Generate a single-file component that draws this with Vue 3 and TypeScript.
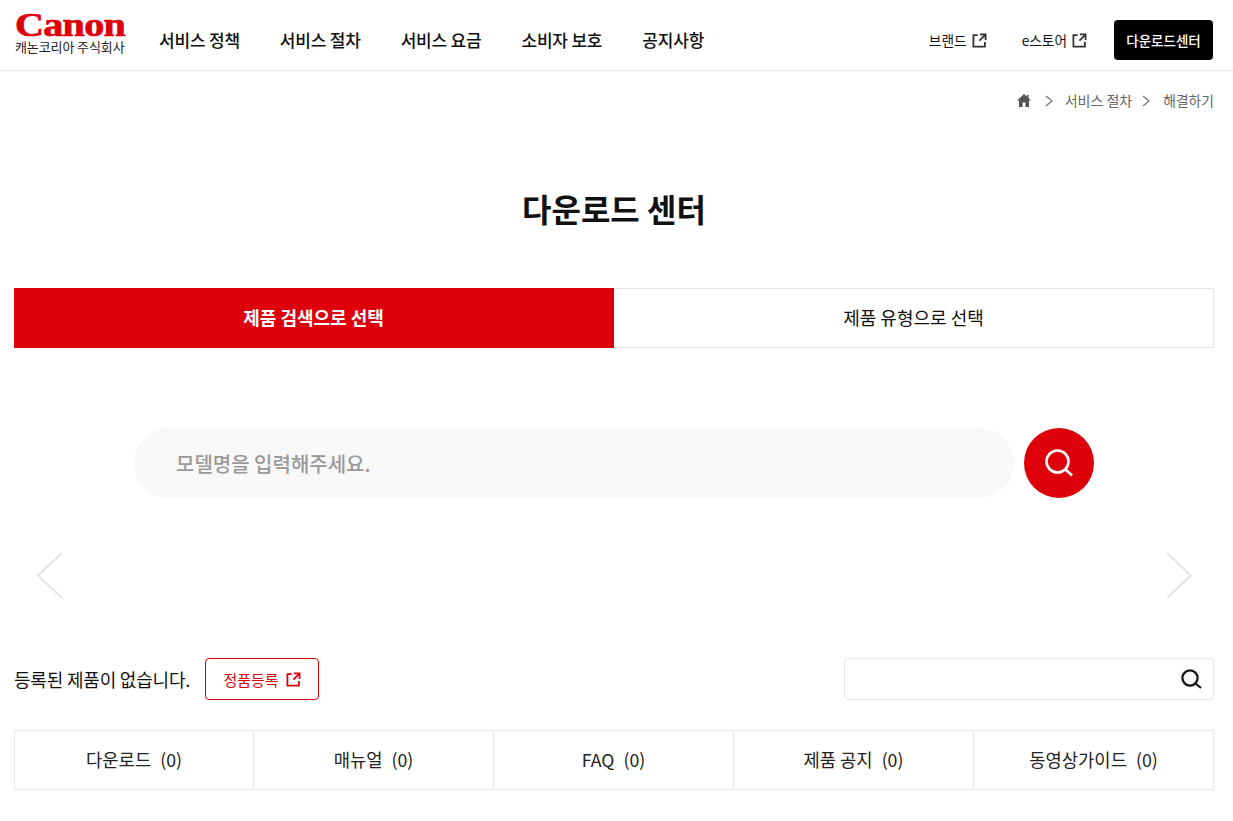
<template>
  <div class="page">
    <header class="header">
      <a class="logo">
        <span class="logoMark">Canon</span>
        <span class="logoSub">캐논코리아 주식회사</span>
      </a>
      <nav class="gnb">
        <a v-for="m in menus" :key="m">{{ m }}</a>
      </nav>
      <div class="util">
        <a v-for="u in utils" :key="u" class="utilLink">
          {{ u }}
          <svg class="ext" width="15" height="15" viewBox="0 0 16 16" fill="none" stroke="#333" stroke-width="1.9">
            <path d="M6 2.2H1.5V14.5H13.8V9.5" />
            <path d="M8.5 1.5H14.5V7.5M14 2L8 8.2" />
          </svg>
        </a>
        <a class="downBtn">다운로드센터</a>
      </div>
    </header>

    <main class="main">
      <div class="crumb">
        <svg width="14" height="13" viewBox="0 0 14 13" fill="#555">
          <path d="M7 0L0 6.5H2V13H5.6V8.6H8.4V13H12V6.5H14L11.6 4.2V1H9.8V2.6Z" />
        </svg>
        <svg class="chev first" width="8" height="12" viewBox="0 0 8 12" fill="none" stroke="#777" stroke-width="1.3"><path d="M1 1L7 6L1 11" /></svg>
        <span class="mid">서비스 절차</span>
        <svg class="chev" width="8" height="12" viewBox="0 0 8 12" fill="none" stroke="#777" stroke-width="1.3"><path d="M1 1L7 6L1 11" /></svg>
        <span class="last">해결하기</span>
      </div>

      <h1 class="title">다운로드 센터</h1>

      <div class="modeTabs">
        <div class="modeTab active">제품 검색으로 선택</div>
        <div class="modeTab">제품 유형으로 선택</div>
      </div>

      <div class="searchWrap">
        <div class="searchBox">모델명을 입력해주세요.</div>
        <button class="searchBtn">
          <svg width="30" height="30" viewBox="0 0 30 30" fill="none" stroke="#fff" stroke-width="2.6">
            <circle cx="13.5" cy="13.5" r="11" />
            <path d="M21.5 21.5L28 27.5" />
          </svg>
        </button>
      </div>

      <div class="slider">
        <svg width="28" height="48" viewBox="0 0 28 48" fill="none" stroke="#e6e6e6" stroke-width="2.2"><path d="M26 1L2 23.5L26 46" /></svg>
        <svg width="28" height="48" viewBox="0 0 28 48" fill="none" stroke="#e6e6e6" stroke-width="2.2"><path d="M2 1L26 23.5L2 46" /></svg>
      </div>

      <div class="resultRow">
        <div class="resultLeft">
          <span class="noItem">등록된 제품이 없습니다.</span>
          <a class="regBtn">
            정품등록
            <svg width="15" height="15" viewBox="0 0 16 16" fill="none" stroke="#dd000b" stroke-width="1.9">
              <path d="M6 2.2H1.5V14.5H13.8V9.5" />
              <path d="M8.5 1.5H14.5V7.5M14 2L8 8.2" />
            </svg>
          </a>
        </div>
        <div class="filterBox">
          <svg width="21" height="21" viewBox="0 0 21 21" fill="none" stroke="#111" stroke-width="2.2">
            <circle cx="9" cy="9" r="7.6" />
            <path d="M14.5 14.5L20 19" />
          </svg>
        </div>
      </div>

      <div class="countTabs">
        <div v-for="c in counts" :key="c.name" class="countTab">
          <span>{{ c.name }}</span><span class="num">({{ c.count }})</span>
        </div>
      </div>
    </main>
  </div>
</template>

<script setup lang="ts">
const menus: string[] = ['서비스 정책', '서비스 절차', '서비스 요금', '소비자 보호', '공지사항']
const utils: string[] = ['브랜드', 'e스토어']
const counts: { name: string; count: number }[] = [
  { name: '다운로드', count: 0 },
  { name: '매뉴얼', count: 0 },
  { name: 'FAQ', count: 0 },
  { name: '제품 공지', count: 0 },
  { name: '동영상가이드', count: 0 },
]
</script>

<style>
html, body {
  margin: 0;
  background: #fff;
}
</style>

<style scoped>
.page {
  font-family: "Noto Sans CJK KR", "Noto Sans", sans-serif;
  color: #111;
  min-height: 821px;
}
.header {
  box-sizing: border-box;
  height: 71px;
  border-bottom: 1px solid #e5e5e5;
  display: flex;
  align-items: center;
  padding: 10px 20px 0 15px;
}
.logo {
  display: flex;
  flex-direction: column;
  width: 111px;
  margin-top: -15px;
}
.logoMark {
  font-family: "Liberation Serif", serif;
  font-weight: 700;
  font-size: 34px;
  line-height: 27px;
  color: #dd000b;
  transform: scaleX(1.18);
  transform-origin: left center;
  letter-spacing: -0.6px;
  -webkit-text-stroke: 0.7px #dd000b;
}
.logoSub {
  font-size: 13px;
  line-height: 16px;
  letter-spacing: -0.1px;
  color: #222;
  white-space: nowrap;
  margin-top: 1px;
}
.gnb {
  display: flex;
  gap: 40px;
  margin-left: 33px;
  padding-bottom: 2px;
  font-size: 17px;
  font-weight: 500;
  letter-spacing: -0.2px;
}
.util {
  margin-left: auto;
  display: flex;
  align-items: center;
}
.utilLink {
  display: flex;
  align-items: center;
  gap: 5px;
  font-size: 13.7px;
  margin-right: 35px;
}
.utilLink:nth-child(2) {
  margin-right: 27px;
}
.downBtn {
  width: 99px;
  height: 40px;
  background: #000;
  color: #fff;
  border-radius: 4px;
  font-size: 13.5px;
  font-weight: 500;
  display: flex;
  align-items: center;
  justify-content: center;
}
.main {
  width: 1200px;
  margin-left: 14px;
}
.crumb {
  display: flex;
  align-items: center;
  justify-content: flex-end;
  height: 59px;
  font-size: 14px;
  color: #666;
  gap: 12px;
}
.crumb span {
  margin-bottom: 2px;
}
.crumb .mid {
  margin-right: -2px;
}
.crumb .last {
  font-size: 13.8px;
  margin-left: 1px;
}
.crumb .first {
  margin-left: 2px;
}
.title {
  margin: 55px 0 0;
  text-align: center;
  font-size: 32px;
  font-weight: 700;
  line-height: 46px;
  height: 103px;
}
.modeTabs {
  display: flex;
  height: 60px;
}
.modeTab {
  flex: 1;
  display: flex;
  align-items: center;
  justify-content: center;
  border: 1px solid #e5e5e5;
  border-left: 0;
  font-size: 18px;
  padding-bottom: 2px;
  box-sizing: border-box;
}
.modeTab.active {
  background: #dd000b;
  border-color: #dd000b;
  color: #fff;
  font-weight: 700;
}
.searchWrap {
  display: flex;
  justify-content: center;
  gap: 10px;
  margin-top: 80px;
}
.searchBox {
  width: 880px;
  height: 70px;
  box-sizing: border-box;
  border-radius: 35px;
  background: #f8f8f8;
  padding-left: 42px;
  display: flex;
  align-items: center;
  font-size: 20px;
  font-weight: 500;
  color: #999;
}
.searchBtn {
  width: 70px;
  height: 70px;
  border: 0;
  border-radius: 50%;
  background: #dd000b;
  padding: 0;
  display: flex;
  align-items: center;
  justify-content: center;
}
.slider {
  display: flex;
  justify-content: space-between;
  padding: 0 21px 0 22px;
  margin-top: 54px;
  height: 106px;
}
.resultRow {
  display: flex;
  justify-content: space-between;
  align-items: center;
  height: 42px;
}
.resultLeft {
  display: flex;
  align-items: center;
  gap: 15px;
}
.noItem {
  font-size: 18px;
  letter-spacing: -0.2px;
  color: #111;
}
.regBtn {
  width: 114px;
  height: 42px;
  box-sizing: border-box;
  border: 1px solid #dd000b;
  border-radius: 4px;
  color: #dd000b;
  font-size: 15px;
  display: flex;
  align-items: center;
  justify-content: center;
  gap: 7px;
}
.filterBox {
  width: 370px;
  height: 42px;
  box-sizing: border-box;
  border: 1px solid #e5e5e5;
  border-radius: 4px;
  display: flex;
  align-items: center;
  justify-content: flex-end;
  padding-right: 11px;
}
.countTabs {
  display: grid;
  grid-template-columns: repeat(5, 240px);
  height: 60px;
  margin-top: 30px;
}
.countTab {
  box-sizing: border-box;
  display: flex;
  align-items: center;
  justify-content: center;
  gap: 9px;
  font-size: 17.7px;
  color: #222;
  padding-bottom: 3px;
  border: 1px solid #e5e5e5;
  border-left: 0;
}
.countTab:first-child {
  border-left: 1px solid #e5e5e5;
}
</style>
